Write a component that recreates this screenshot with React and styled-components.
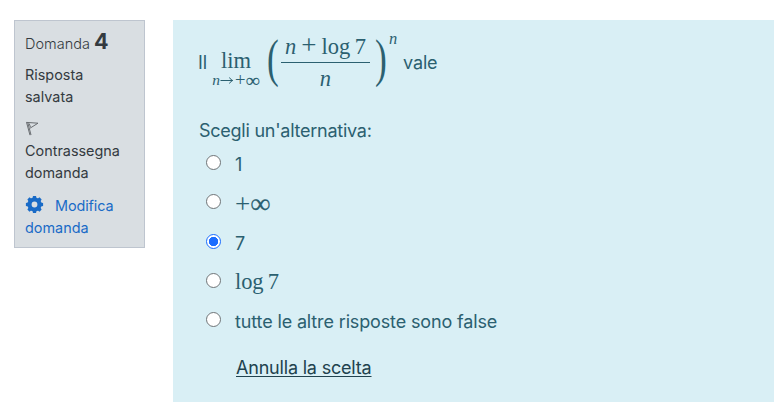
import React, { useState } from "react";
import styled, { createGlobalStyle } from "styled-components";

const GlobalStyle = createGlobalStyle`
  *, *::before, *::after { box-sizing: border-box; }
  body { margin: 0; background: #fff; font-family: Inter, "Liberation Sans", sans-serif; }
`;

const Page = styled.main`
  display: flex;
  align-items: flex-start;
  gap: 28px;
  width: 774px;
  height: 420px;
  padding: 20px 0 0 14px;
  overflow: hidden;
`;

const InfoPanel = styled.aside`
  flex: none;
  width: 131px;
  height: 228px;
  padding: 6px 10px;
  border: 1px solid #bec5cf;
  background: #d9dee2;
  color: #343a40;
  font-size: 14.4px;
  line-height: 22px;
`;

const QuestionNumber = styled.h3`
  margin: 0;
  height: 37px;
  padding-top: 2px;
  line-height: 30px;
  font-size: 14.5px;
  font-weight: 300;
  white-space: nowrap;
`;

const NumberValue = styled.span`
  font-size: 21.5px;
  font-weight: 700;
  line-height: 24px;
`;

const InfoText = styled.div`
  letter-spacing: 0.01px;
`;

const FlagRow = styled.div`
  height: 32px;
  padding: 13px 0 0 1px;
  line-height: 0;
`;

const EditLink = styled.a`
  display: block;
  margin-top: 11px;
  color: #1a6bc7;
  text-decoration: none;
`;

const EditLine = styled.span`
  display: flex;
  gap: 11px;
  height: 22px;
  letter-spacing: -0.1px;
`;

const Formulation = styled.section`
  flex: 1;
  height: 382px;
  padding: 17px 0 0 25px;
  background: #d9eff5;
  color: #2b6070;
  font-size: 18px;
  letter-spacing: -0.14px;
`;

const Prompt = styled.div`
  display: flex;
  height: 82px;
`;

const PromptWord = styled.span`
  line-height: 22px;
  padding-top: 15px;
  margin-left: ${(p) => p.$gap || 0}px;
`;

const Limit = styled.span`
  display: flex;
  flex-direction: column;
  align-items: center;
  width: 50px;
  margin-left: 4px;
  padding-top: 11px;
  font: 22.5px/26px "Liberation Serif", serif;
  letter-spacing: 0;
`;

const LimitBound = styled.span`
  display: flex;
  align-items: center;
  margin-top: -2px;
  font-size: 15.5px;
  line-height: 16px;
  white-space: nowrap;
`;

const Arrow = styled.svg`
  flex: none;
  margin: 1px 1px 0 0;
`;

const Plus = styled.span`
  font-size: 1.2em;
  line-height: 0;
`;

const Infinity = styled.span`
  font-size: 1.28em;
  line-height: 0;
  -webkit-text-stroke: 0.15px currentColor;
`;

const Paren = styled.span`
  width: 12px;
  margin-left: ${(p) => p.$gap}px;
  font: 52px/48px "Liberation Serif", serif;
  transform: translateY(-2px) scaleX(0.68);
  transform-origin: left center;
`;

const Fraction = styled.span`
  display: flex;
  flex-direction: column;
  width: 89px;
  margin-left: 2px;
  text-align: center;
  font: 22.5px/25px "Liberation Serif", serif;
  letter-spacing: 0;
  white-space: nowrap;
`;

const Numerator = styled.span`
  display: flex;
  justify-content: center;
  align-items: baseline;
  height: 26px;
  line-height: 20px;
  gap: 5px;
  border-bottom: 1px solid #2b6070;
`;

const Denominator = styled.span`
  padding-top: 3px;
`;

const Exponent = styled.span`
  margin-left: 2px;
  font: italic 16.5px/18px "Liberation Serif", serif;
  margin-top: -7px;
`;

const Instruction = styled.div`
  height: 31px;
  padding-left: 1px;
  line-height: 24px;
  letter-spacing: -0.25px;
`;

const Choice = styled.label`
  display: flex;
  align-items: flex-start;
  height: ${(p) => p.$height}px;
  padding-left: 8px;
`;

const Radio = styled.input`
  flex: none;
  appearance: none;
  width: 15px;
  height: 15px;
  margin: 5px 14px 0 0;
  border: 1px solid #6f7477;
  border-radius: 50%;
  background: #fff;

  &:checked {
    border-color: #1c6dff;
    background: radial-gradient(circle, #1c6dff 0 4.4px, #fff 5px);
  }
`;

const ChoiceText = styled.span`
  padding-top: ${(p) => p.$drop || 0}px;
  line-height: 28px;
  white-space: nowrap;
`;

const MathText = styled(ChoiceText)`
  font: 22.5px/28px "Liberation Serif", serif;
  letter-spacing: -0.1px;
`;

const ClearLink = styled.a`
  display: inline-block;
  margin: 8px 0 0 38px;
  color: #21424e;
  line-height: 24px;
  letter-spacing: -0.19px;
  text-decoration: underline;
  text-decoration-thickness: 1px;
  text-underline-offset: 2px;
`;

const FlagIcon = () => (
  <svg width="13" height="15" viewBox="0 0 13 15" fill="none" stroke="#696d71" strokeWidth="1">
    <path d="M.5 1.2 4 14.2M1.7 1.2 5 14M.5 1.4 12 2.2 4 7.2M3.2 2.5 4.4 6" />
  </svg>
);

const GearIcon = () => (
  <svg width="19" height="19" viewBox="0 0 19 19">
    <circle cx="9.5" cy="9.5" r="5" fill="none" stroke="#1a6bc7" strokeWidth="4.2" />
    {[0, 45, 90, 135, 180, 225, 270, 315].map((a) => (
      <path key={a} d="M7.5 3.2 8 .9h3l.5 2.3z" fill="#1a6bc7" transform={`rotate(${a} 9.5 9.5)`} />
    ))}
  </svg>
);

const ArrowIcon = () => (
  <Arrow width="14" height="9" viewBox="0 0 14 9" fill="none" stroke="#2b6070">
    <path d="M.5 4.5h12M9.5 1.5q1 2.3 3.2 3-2.2.7-3.2 3" />
  </Arrow>
);

const PlusInfinity = () => (
  <>
    <Plus>+</Plus>
    <Infinity>∞</Infinity>
  </>
);

const choices = [
  { id: "one", height: 39, drop: 1, label: "1" },
  { id: "infinity", height: 40, drop: 3, label: <PlusInfinity />, math: true },
  { id: "seven", height: 39, drop: 1, label: "7" },
  { id: "log", height: 39, label: "log\u20097", math: true },
  { id: "other", height: 41, drop: 1, label: "tutte le altre risposte sono false" },
];

export default function App() {
  const [selected, setSelected] = useState("seven");
  return (
    <>
      <GlobalStyle />
      <Page>
        <InfoPanel>
          <QuestionNumber>
            Domanda <NumberValue>4</NumberValue>
          </QuestionNumber>
          <InfoText>Risposta<br />salvata</InfoText>
          <FlagRow><FlagIcon /></FlagRow>
          <InfoText>Contrassegna<br />domanda</InfoText>
          <EditLink href="#">
            <EditLine><GearIcon />Modifica</EditLine>
            domanda
          </EditLink>
        </InfoPanel>
        <Formulation>
          <Prompt>
            <PromptWord>Il</PromptWord>
            <Limit>
              lim
              <LimitBound><i>n</i><ArrowIcon /><PlusInfinity /></LimitBound>
            </Limit>
            <Paren $gap={6}>(</Paren>
            <Fraction>
              <Numerator><i>n</i><Plus>+</Plus><span>log&thinsp;7</span></Numerator>
              <Denominator><i>n</i></Denominator>
            </Fraction>
            <Paren $gap={5}>)</Paren>
            <Exponent>n</Exponent>
            <PromptWord $gap={6}>vale</PromptWord>
          </Prompt>
          <Instruction>Scegli un'alternativa:</Instruction>
          {choices.map((c) => {
            const Label = c.math ? MathText : ChoiceText;
            return (
              <Choice key={c.id} $height={c.height}>
                <Radio
                  type="radio"
                  name="answer"
                  checked={selected === c.id}
                  onChange={() => setSelected(c.id)}
                />
                <Label $drop={c.drop}>{c.label}</Label>
              </Choice>
            );
          })}
          <ClearLink href="#">Annulla la scelta</ClearLink>
        </Formulation>
      </Page>
    </>
  );
}
